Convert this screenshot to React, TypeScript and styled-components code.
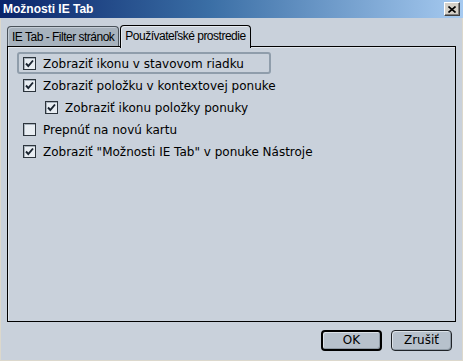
import React from "react";
import styled, { createGlobalStyle } from "styled-components";

const Global = createGlobalStyle`
  html, body { margin: 0; padding: 0; background: #c9d1db; }
  #root { width: 463px; height: 361px; }
`;

const Window = styled.div`
  width: 463px;
  height: 361px;
  box-sizing: border-box;
  display: flex;
  flex-direction: column;
  background: #c9d1db;
  border-left: 1px solid #dcd8cc;
  border-right: 1px solid #dcd8cc;
  border-bottom: 1px solid #dcd8cc;
  font-family: "DejaVu Sans", sans-serif;
  font-size: 12px;
  color: #000;
`;

const TitleBar = styled.div`
  height: 18px;
  margin: 0 -1px;
  display: flex;
  align-items: center;
  justify-content: space-between;
  padding: 0 3px 0 3px;
  background: linear-gradient(90deg, #0a246a 0%, #3a6ea5 45%, #a6caf0 100%);
`;

const Title = styled.span`
  color: #fff;
  font-family: "Liberation Sans", Arial, sans-serif;
  font-weight: bold;
  font-size: 12px;
`;

const CloseBtn = styled.div`
  width: 16px;
  height: 14px;
  box-sizing: border-box;
  background: #d4d0c8;
  border: 1px solid;
  border-color: #fff #404040 #404040 #fff;
  box-shadow: inset -1px -1px 0 #808080;
  display: flex;
  align-items: center;
  justify-content: center;
`;

const Body = styled.div`
  flex: 1;
  display: flex;
  flex-direction: column;
  padding: 7px 6px 0 6px;
`;

const TabStrip = styled.div`
  display: flex;
  align-items: flex-end;
  height: 21px;
  position: relative;
  z-index: 1;
`;

const Tab = styled.div<{ $active?: boolean }>`
  box-sizing: border-box;
  height: ${(p) => (p.$active ? "23px" : "20px")};
  margin-bottom: ${(p) => (p.$active ? "-2px" : "0")};
  padding: 0 4px;
  display: flex;
  align-items: ${(p) => (p.$active ? "flex-start" : "center")};
  padding-top: ${(p) => (p.$active ? "3px" : "0")};
  border: 1px solid ${(p) => (p.$active ? "#000" : "#4a525a")};
  border-bottom: none;
  border-radius: 4px 4px 0 0;
  background: ${(p) => (p.$active ? "#c9d1db" : "#a7b2bd")};
  box-shadow: inset 1px 1px 0 ${(p) => (p.$active ? "#e4e9ef" : "#c3ccd5")};
  margin-left: ${(p) => (p.$active ? "1px" : "0")};
  white-space: nowrap;
  font-family: "Liberation Sans", Arial, sans-serif;
  font-size: 12px;
  letter-spacing: -0.5px;
`;

const Panel = styled.div`
  box-sizing: border-box;
  height: 276px;
  border: 1px solid #000;
  box-shadow: inset 1px 1px 0 #e1e6ec;
  padding-top: 5px;
  display: flex;
  flex-direction: column;
`;

const Row = styled.div<{ $focus?: boolean; $indent?: boolean }>`
  box-sizing: border-box;
  width: 254px;
  height: 22px;
  margin-left: 9px;
  border: 2px solid ${(p) => (p.$focus ? "#8f9dab" : "transparent")};
  border-radius: 3px;
  padding-left: ${(p) => (p.$indent ? "26px" : "4px")};
  padding-top: 1px;
  display: flex;
  align-items: center;
  gap: 7px;
  white-space: nowrap;
`;

const Box = styled.span`
  width: 13px;
  height: 13px;
  box-sizing: border-box;
  border: 1px solid #2c343c;
  background: #e8edf2;
  box-shadow: inset 1px 1px 0 #a8b2bc;
  display: flex;
  align-items: center;
  justify-content: center;
  flex: none;
`;

const Footer = styled.div`
  display: flex;
  justify-content: flex-end;
  gap: 9px;
  padding: 8px 4px 0 0;
`;

const Button = styled.div<{ $default?: boolean }>`
  box-sizing: border-box;
  width: 61px;
  height: 21px;
  border: ${(p) => (p.$default ? "2px solid #000" : "1px solid #202428")};
  border-radius: 4px;
  background: #b7c1cc;
  box-shadow: inset 1px 1px 0 #dbe1e7, inset -1px -1px 0 #8e99a4;
  display: flex;
  align-items: center;
  justify-content: center;
  padding-bottom: 1px;
`;

const Check = ({ on }: { on: boolean }) => (
  <Box>
    {on && (
      <svg width="9" height="9" viewBox="0 0 9 9">
        <path d="M1 4.5 L3.3 7 L8 1.5" stroke="#1a2430" strokeWidth="1.9" fill="none" />
      </svg>
    )}
  </Box>
);

const items = [
  { label: "Zobraziť ikonu v stavovom riadku", on: true, focus: true },
  { label: "Zobraziť položku v kontextovej ponuke", on: true },
  { label: "Zobraziť ikonu položky ponuky", on: true, indent: true },
  { label: "Prepnúť na novú kartu", on: false },
  { label: "Zobraziť \"Možnosti IE Tab\" v ponuke Nástroje", on: true },
];

export default function App() {
  return (
    <>
      <Global />
      <Window>
        <TitleBar>
          <Title>Možnosti IE Tab</Title>
          <CloseBtn>
            <svg width="8" height="7" viewBox="0 0 8 7">
              <path d="M0.5 0.5 L7.5 6.5 M7.5 0.5 L0.5 6.5" stroke="#000" strokeWidth="1.6" />
            </svg>
          </CloseBtn>
        </TitleBar>
        <Body>
          <TabStrip>
            <Tab>IE Tab - Filter stránok</Tab>
            <Tab $active>Používateľské prostredie</Tab>
          </TabStrip>
          <Panel>
            {items.map((it) => (
              <Row key={it.label} $focus={it.focus} $indent={it.indent}>
                <Check on={it.on} />
                <span>{it.label}</span>
              </Row>
            ))}
          </Panel>
          <Footer>
            <Button $default>OK</Button>
            <Button>Zrušiť</Button>
          </Footer>
        </Body>
      </Window>
    </>
  );
}
